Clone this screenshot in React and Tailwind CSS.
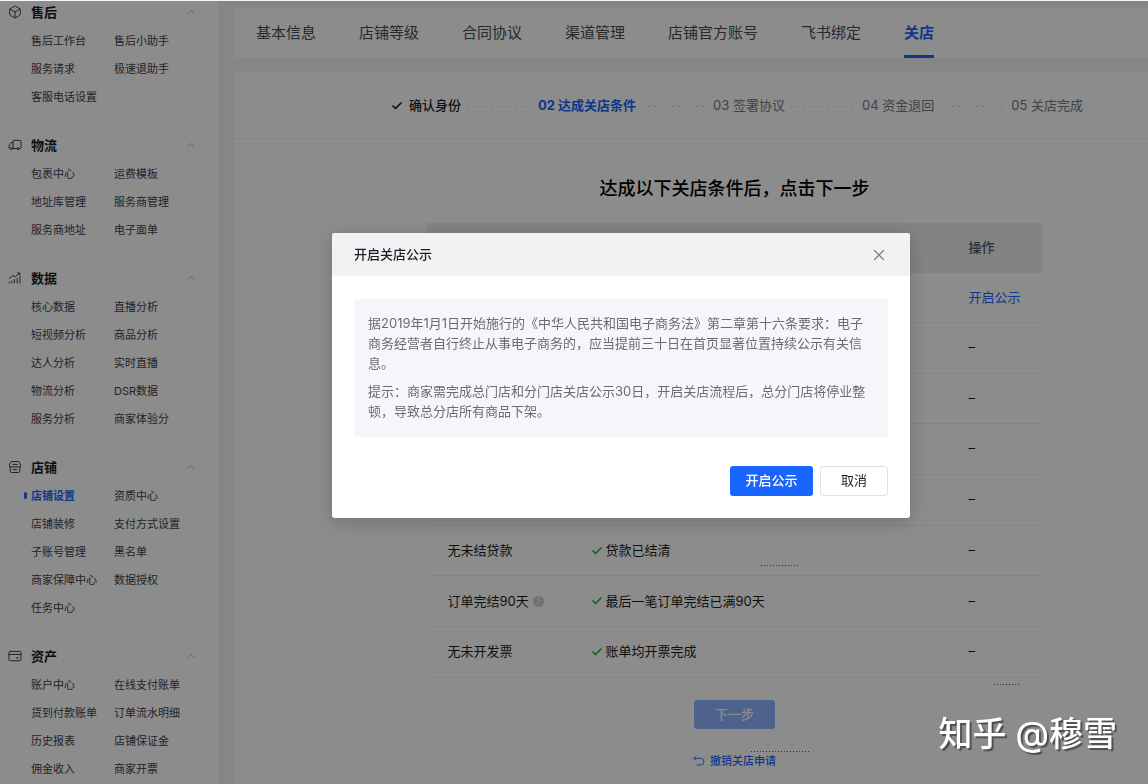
import React from "react";
import { Box, Check, ChevronUp, X } from "lucide-react";

const svgProps = {
  viewBox: "0 0 14 14",
  fill: "none",
  stroke: "currentColor",
  strokeLinecap: "round",
  strokeLinejoin: "round",
  "aria-hidden": true,
};

function TruckIcon() {
  return (
    <svg {...svgProps} className="size-3.5">
      <path d="M5 10.5V3.4Q5 2.3 6.1 2.3h5.8Q13 2.3 13 3.4v6.2q0 .9-.9.9h-.6M8.7 10.5H5.3M5 4.6H3.6q-.5 0-.8.5L1 7.7v2q0 .8.7.8" />
      <circle cx="3.5" cy="10.6" r="1.1" />
      <circle cx="10.1" cy="10.6" r="1.1" />
    </svg>
  );
}

function ChartIcon() {
  return (
    <svg {...svgProps} className="size-3.5">
      <path d="M1.2 12v-.9M3.8 12v-2M6.4 12V8.6M9.2 12V7.4M12 12V5.6M1.2 7.4 5 4.6l2.4 1.1 4.2-3.4M9.6 2h2.2v2" />
    </svg>
  );
}

function ShopIcon() {
  return (
    <svg {...svgProps} className="size-3.5">
      <path d="M3.6 1.5h6.800q.6 0 .9.600l1.300 2.900v.6q0 1.300-1.300 1.300H2.700q-1.300 0-1.300-1.300V5l1.300-2.900q.3-.6.900-.6ZM2.200 7v4.200q0 1.300 1.300 1.300h7q1.300 0 1.300-1.300V7M4.800 4.400h4.400M5.200 9.600h3.600" />
    </svg>
  );
}

function CardIcon() {
  return (
    <svg {...svgProps} className="size-3.5">
      <rect x="1" y="2.4" width="12" height="9.4" rx="1.3" />
      <path d="M1 5.4h12M8.3 8.9h2.2" />
    </svg>
  );
}

function UndoIcon() {
  return (
    <svg {...svgProps} className="size-3">
      <path d="M3.400 1.800 1 3.900l2.400 2.100M1.200 3.900H8.800a3.900 3.900 0 0 1 0 7.800H4.500" />
    </svg>
  );
}

const groups = [
  {
    title: "售后",
    icon: <Box className="size-3.5" strokeWidth={1.7} />,
    items: ["售后工作台", "售后小助手", "服务请求", "极速退助手", "客服电话设置"],
  },
  {
    title: "物流",
    icon: <TruckIcon />,
    items: ["包裹中心", "运费模板", "地址库管理", "服务商管理", "服务商地址", "电子面单"],
  },
  {
    title: "数据",
    icon: <ChartIcon />,
    items: [
      "核心数据", "直播分析", "短视频分析", "商品分析", "达人分析",
      "实时直播", "物流分析", "DSR数据", "服务分析", "商家体验分",
    ],
  },
  {
    title: "店铺",
    icon: <ShopIcon />,
    items: [
      "店铺设置", "资质中心", "店铺装修", "支付方式设置", "子账号管理",
      "黑名单", "商家保障中心", "数据授权", "任务中心",
    ],
  },
  {
    title: "资产",
    icon: <CardIcon />,
    items: [
      "账户中心", "在线支付账单", "货到付款账单", "订单流水明细",
      "历史报表", "店铺保证金", "佣金收入", "商家开票",
    ],
  },
];

const tabs = ["基本信息", "店铺等级", "合同协议", "渠道管理", "店铺官方账号", "飞书绑定", "关店"];

const steps = ["确认身份", "02 达成关店条件", "03 签署协议", "04 资金退回", "05 关店完成"];

const rows = [
  { action: "开启公示" },
  {},
  {},
  {},
  {},
  { name: "无未结贷款", status: "贷款已结清" },
  { name: "订单完结90天", status: "最后一笔订单完结已满90天", help: true },
  { name: "无未开发票", status: "账单均开票完成" },
];

function Sidebar() {
  return (
    <aside className="w-[219px] shrink-0 overflow-hidden bg-white">
      <nav className="-mt-1">
        {groups.map((g) => (
          <section key={g.title} className="mb-[19px]">
            <button
              type="button"
              className="flex h-[30px] w-full items-center pt-0.5 pr-[22px] pl-2 text-[13px] font-bold text-[#1b1d22]"
            >
              <span className="mr-[9px] pb-0.5 text-[#3c3e44]">{g.icon}</span>
              {g.title}
              <ChevronUp className="mb-0.5 ml-auto size-3 text-[#9a9ca3]" strokeWidth={1.5} />
            </button>
            <ul className="grid grid-cols-[83px_1fr] pl-[31px] text-[11px] text-[#3f4147]">
              {g.items.map((item) => {
                const active = item === "店铺设置";
                return (
                  <li key={item} className="relative flex h-7 items-center whitespace-nowrap">
                    {active && (
                      <span className="absolute top-2.5 -left-[7px] h-[7px] w-[3px] rounded-sm bg-[#1966ff]" />
                    )}
                    <a href="#" className={active ? "font-bold text-[#1966ff]" : ""}>
                      {item}
                    </a>
                  </li>
                );
              })}
            </ul>
          </section>
        ))}
      </nav>
    </aside>
  );
}

function Tabs() {
  return (
    <nav className="flex h-[50px] gap-[43px] bg-white pl-[22px] text-[15px] text-[#4a4c52]">
      {tabs.map((t) => (
        <a
          key={t}
          href="#"
          className={
            t === "关店"
              ? "flex items-center border-b-3 border-[#1966ff] pt-[3px] font-bold whitespace-nowrap text-[#1966ff]"
              : "flex items-center whitespace-nowrap"
          }
        >
          {t}
        </a>
      ))}
    </nav>
  );
}

function Steps() {
  return (
    <ol className="flex h-[66px] items-center justify-center gap-1.5 pt-0.5 text-[13px] whitespace-nowrap text-[#76787e]">
      {steps.map((s, i) => (
        <li key={s} className="flex items-center gap-1.5">
          {i > 0 && (
            <span className="h-px w-[65px] bg-[repeating-linear-gradient(90deg,#d4d5d9_0_2px,transparent_2px_6px)]" />
          )}
          {i === 0 && <Check className="size-3 text-[#1b1d22]" strokeWidth={3.5} />}
          <span
            className={
              i === 0
                ? "font-medium text-[#1b1d22]"
                : i === 1
                  ? "font-bold text-[#1966ff]"
                  : ""
            }
          >
            {s}
          </span>
        </li>
      ))}
    </ol>
  );
}

function ConditionTable() {
  return (
    <table className="h-[455px] w-full max-w-[616px] table-fixed text-left text-[13px] text-[#1b1d22]">
      <colgroup>
        <col className="w-[143px]" />
        <col />
        <col className="w-[95px]" />
      </colgroup>
      <thead>
        <tr className="h-[50px] bg-[#ebeef2]">
          <td />
          <td />
          <th className="pl-[21px] font-medium text-[#55585f]">操作</th>
        </tr>
      </thead>
      <tbody>
        {rows.map((r, i) => (
          <tr key={i} className="border-b border-[#eff0f2]">
            <td className="pl-[21px] whitespace-nowrap">
              <span className="flex items-center gap-1">
                {r.name}
                {r.help && (
                  <span className="flex size-[11px] items-center justify-center rounded-full bg-[#cccdd1] text-[8px] text-[#f4f5f7]">
                    ?
                  </span>
                )}
              </span>
            </td>
            <td className="pl-[21px] whitespace-nowrap">
              {r.status && (
                <span className="flex items-center gap-[3px]">
                  <Check className="size-3 text-[#25b03a]" strokeWidth={3.5} />
                  {r.status}
                </span>
              )}
            </td>
            <td className="pl-[21px] whitespace-nowrap">
              {r.action ? (
                <a href="#" className="text-[#1966ff]">
                  {r.action}
                </a>
              ) : (
                "–"
              )}
            </td>
          </tr>
        ))}
      </tbody>
    </table>
  );
}

function Dialog() {
  return (
    <div
      role="dialog"
      aria-labelledby="dialog-title"
      className="w-[578px] overflow-hidden rounded-[3px] bg-white text-[13px] shadow-[0_4px_20px_rgba(0,0,0,0.2)]"
    >
      <header className="flex h-[43px] items-center justify-between bg-[#f1f2f4] pr-[22px] pl-[22px]">
        <h2 id="dialog-title" className="font-medium text-[#1b1d22]">
          开启关店公示
        </h2>
        <button type="button" aria-label="关闭" className="text-[#7d7f85]">
          <X className="size-[18px]" strokeWidth={1.7} />
        </button>
      </header>
      <div className="px-[22px] pt-[23px] pb-[22px]">
        <div className="space-y-2 rounded-[3px] bg-[#f5f6fa] px-3.5 pt-3.5 pb-4 leading-5 text-[#6a6c73]">
          <p>
            据2019年1月1日开始施行的《中华人民共和国电子商务法》第二章第十六条要求：电子商务经营者自行终止从事电子商务的，应当提前三十日在首页显著位置持续公示有关信息。
          </p>
          <p>
            提示：商家需完成总门店和分门店关店公示30日，开启关店流程后，总分门店将停业整顿，导致总分店所有商品下架。
          </p>
        </div>
        <div className="mt-[29px] flex justify-end gap-[7px]">
          <button
            type="button"
            className="h-[30px] w-[83px] rounded-[3px] bg-[#1966ff] font-medium text-white"
          >
            开启公示
          </button>
          <button
            type="button"
            className="h-[30px] w-[68px] rounded-[3px] border border-[#dfe0e3] bg-white text-[#1b1d22]"
          >
            取消
          </button>
        </div>
      </div>
    </div>
  );
}

function DottedMark({ className }) {
  return (
    <span
      className={`absolute h-px bg-[repeating-linear-gradient(90deg,#333_0_1px,transparent_1px_3px)] ${className}`}
    />
  );
}

export default function App() {
  return (
    <div className="h-screen overflow-hidden bg-[#f4f5f7] pt-px font-['Inter','Noto_Sans_CJK_SC',sans-serif]">
      <div className="flex h-full gap-[15px]">
        <Sidebar />
        <main className="flex min-w-0 flex-1 flex-col gap-3.5 pt-[7px]">
          <Tabs />
          <div className="flex-1 bg-white">
            <div className="border-b border-[#eeeff1] pl-[92px]">
              <Steps />
            </div>
            <div className="flex flex-col items-center pt-9 pl-[87px]">
              <h1 className="mb-5 text-lg font-medium text-black">
                达成以下关店条件后，点击下一步
              </h1>
              <ConditionTable />
              <button
                type="button"
                className="mt-[22px] h-[29px] w-[81px] rounded-[3px] bg-[#8cb4ff] text-[13px] font-medium text-white"
              >
                下一步
              </button>
              <a
                href="#"
                className="mt-6 flex items-center gap-[5px] text-[11px] font-medium text-[#1966ff]"
              >
                <UndoIcon />
                撤销关店申请
              </a>
            </div>
          </div>
        </main>
      </div>
      <div className="fixed inset-x-0 top-px bottom-0 flex items-start justify-center bg-black/45 pt-[232px] pl-[94px]">
        <Dialog />
        <DottedMark className="top-[564px] left-[761px] w-[38px]" />
        <DottedMark className="top-[683px] left-[994px] w-[27px]" />
        <DottedMark className="top-[750px] left-[751px] w-[58px]" />
        <p className="absolute right-[31px] bottom-[25px] text-[34px] leading-[50px] font-medium text-white [text-shadow:2px_2px_1px_rgba(0,0,0,0.45)]">
          知乎 @穆雪
        </p>
      </div>
    </div>
  );
}
